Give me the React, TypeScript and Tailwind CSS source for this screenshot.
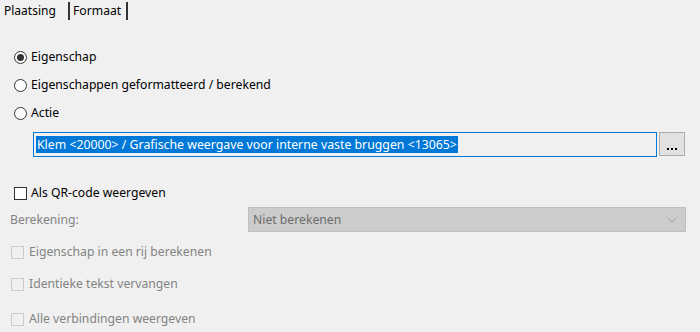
const Radio = ({ checked, label }: { checked?: boolean; label: string }) => (
  <div className="flex h-[16px] items-center">
    <span className="ml-[14px] flex h-[13px] w-[13px] items-center justify-center rounded-full border border-[#333333] bg-white">
      {checked && <span className="h-[7px] w-[7px] rounded-full bg-[#333333]" />}
    </span>
    <span className="ml-[4px] text-black">{label}</span>
  </div>
);

const Check = ({ label, disabled }: { label: string; disabled?: boolean }) => (
  <div className="flex h-[16px] items-center">
    <span
      className={
        disabled
          ? "ml-[11px] h-[13px] w-[13px] border border-[#cccccc] bg-[#f0f0f0]"
          : "ml-[14px] h-[13px] w-[13px] border border-[#333333] bg-white"
      }
    />
    <span className={disabled ? "ml-[5px] text-[#838383]" : "ml-[4px] text-black"}>{label}</span>
  </div>
);

const App = () => {
  return (
    <div
      className="h-[332px] w-[700px] overflow-hidden bg-[#f0f0f0] text-[12.2px] leading-[16px]"
      style={{ fontFamily: '"Segoe UI", "Noto Sans", sans-serif' }}
    >
      {/* tabs */}
      <div className="flex h-[20px] items-start">
        <div className="w-[68px] pl-[4px] pt-[3px] text-[12px] text-black">Plaatsing</div>
        <div className="mt-[2px] flex h-[18px] w-[60px] items-end border-x-2 border-x-[#333333] pb-[1px] pl-[3px] text-black">
          Formaat
        </div>
      </div>

      {/* type radios */}
      <div className="mt-[29px] flex flex-col gap-[12px]">
        <Radio checked label="Eigenschap" />
        <Radio label="Eigenschappen geformatteerd / berekend" />
        <Radio label="Actie" />
      </div>

      {/* property field */}
      <div className="mt-[11px] flex items-start">
        <div className="ml-[33px] flex h-[25px] w-[624px] items-center border border-[#0078d7] bg-[#f0f0f0] pl-[2px]">
          <span className="bg-[#0078d7] px-[1px] text-[12.3px] leading-[17px] text-white">
            Klem &lt;20000&gt; / Grafische weergave voor interne vaste bruggen &lt;13065&gt;
          </span>
        </div>
        <button className="ml-[2px] flex h-[24px] w-[26px] items-end justify-center border border-[#adadad] bg-[#e1e1e1] pb-[5px]">
          <span className="flex gap-[2px]">
            <span className="h-[2px] w-[2px] bg-black" />
            <span className="h-[2px] w-[2px] bg-black" />
            <span className="h-[2px] w-[2px] bg-black" />
          </span>
        </button>
      </div>

      <div className="mt-[28px]">
        <Check label="Als QR-code weergeven" />
      </div>

      {/* calculation */}
      <div className="mt-[6px] flex items-center">
        <span className="ml-[10px] w-[238px] text-[#838383]">Berekening:</span>
        <div className="flex h-[25px] w-[438px] items-center justify-between border border-[#bfbfbf] bg-[#cccccc] pl-[4px] pr-[8px] text-[#6d6d6d]">
          <span>Niet berekenen</span>
          <svg width="10" height="6" viewBox="0 0 10 6" fill="none">
            <path d="M0.5 0.5 L5 5 L9.5 0.5" stroke="#a0a0a0" strokeWidth="1" />
          </svg>
        </div>
      </div>

      <div className="mt-[12px]">
        <Check disabled label="Eigenschap in een rij berekenen" />
      </div>
      <div className="mt-[16px]">
        <Check disabled label="Identieke tekst vervangen" />
      </div>
      <div className="mt-[19px]">
        <Check disabled label="Alle verbindingen weergeven" />
      </div>
    </div>
  );
};

export default App;
